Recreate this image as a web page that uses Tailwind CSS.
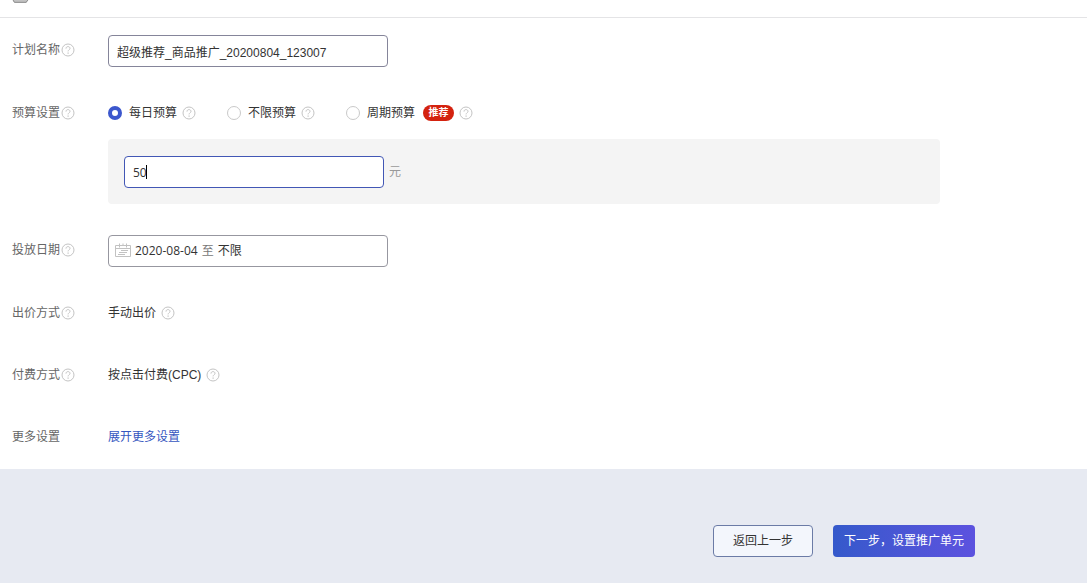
<!DOCTYPE html>
<html lang="zh-CN">
<head>
<meta charset="utf-8">
<title>新建推广计划</title>
<script src="https://cdn.jsdelivr.net/npm/@tailwindcss/browser@4"></script>
</head>
<body class="min-h-screen flex flex-col bg-[#e7eaf2] text-xs text-[#333] font-['Liberation_Sans','Noto_Sans_CJK_SC',sans-serif]">
<svg class="hidden">
    <symbol id="help" viewBox="0 0 14 14">
        <circle cx="7" cy="7" r="6" fill="none" stroke="#c4c4c4"/>
        <path d="M5 5.6C5 4.3 5.9 3.6 7 3.6s2 .7 2 1.8c0 1.3-1.9 1.5-1.9 3" fill="none" stroke="#c4c4c4"/>
        <path d="M6.5 9.6h1.2v1.2H6.5z" fill="#c4c4c4"/>
    </symbol>
</svg>

<header class="h-[18px] pl-3 bg-white border-b border-[#e4e4e6]">
    <svg class="w-[18px] h-[3px]" viewBox="0 0 18 3">
        <path d="M1 0h15l-1.5 3h-12L1 1z" fill="#c2c2c2"/>
        <path d="M1 0l1.5 2.3h11.5L16 0" fill="none" stroke="#8f8f8f"/>
    </svg>
</header>

<main class="bg-white px-3 pt-[17px] pb-4 space-y-[30px]">
    <div class="flex">
        <label for="plan-name" class="w-24 h-[30px] flex items-center gap-px shrink-0 text-[#666]">计划名称<svg class="size-[14px]"><use href="#help"/></svg></label>
        <input id="plan-name" type="text" value="超级推荐_商品推广_20200804_123007"
               class="w-[280px] h-8 px-2 rounded-[4px] border border-[#85859a] bg-white outline-none"/>
    </div>

    <div class="flex mb-[31px]">
        <div class="w-24 h-8 flex items-center gap-px shrink-0 text-[#666]">预算设置<svg class="size-[14px]"><use href="#help"/></svg></div>
        <div class="grow max-w-[832px]">
            <div class="h-8 flex items-center">
                <input id="daily" type="radio" name="budget" checked class="appearance-none size-[14px] rounded-full border border-[#c9c9c9] bg-white checked:border-[4px] checked:border-[#3c57cd]"/>
                <label for="daily" class="ml-[7px]">每日预算</label>
                <svg class="size-[14px] ml-[5px]"><use href="#help"/></svg>
                <input id="unlimited" type="radio" name="budget" class="appearance-none size-[14px] ml-[31px] rounded-full border border-[#c9c9c9] bg-white checked:border-[4px] checked:border-[#3c57cd]"/>
                <label for="unlimited" class="ml-[7px]">不限预算</label>
                <svg class="size-[14px] ml-[5px]"><use href="#help"/></svg>
                <input id="period" type="radio" name="budget" class="appearance-none size-[14px] ml-[31px] rounded-full border border-[#c9c9c9] bg-white checked:border-[4px] checked:border-[#3c57cd]"/>
                <label for="period" class="ml-[7px]">周期预算</label>
                <span class="w-[31px] h-4 ml-2 flex items-center justify-center rounded-full bg-[#d4220f] text-white text-[10px] font-bold">推荐</span>
                <svg class="size-[14px] ml-[5px]"><use href="#help"/></svg>
            </div>
            <div class="mt-[10px] px-4 pt-[17px] pb-4 flex items-center rounded-[4px] bg-[#f4f4f4]">
                <div class="relative">
                    <input id="amount" type="text" value="50" aria-label="每日预算金额"
                           class="block w-[260px] h-8 px-2 rounded-[4px] border border-[#4257b5] bg-white outline-none font-['Open_Sans',sans-serif]"/>
                    <!-- text cursor -->
                    <span class="absolute left-[22px] top-[9px] w-px h-[14px] bg-black"></span>
                </div>
                <label for="amount" class="ml-[5px] text-[#999]">元</label>
            </div>
        </div>
    </div>

    <div class="flex">
        <label for="dates" class="w-24 h-[30px] flex items-center gap-px shrink-0 text-[#666]">投放日期<svg class="size-[14px]"><use href="#help"/></svg></label>
        <button id="dates" type="button" class="w-[280px] h-8 px-[6px] flex items-center rounded-[4px] border border-[#9797a0] bg-white font-['Open_Sans','Noto_Sans_CJK_SC',sans-serif]">
            <svg class="w-4 h-4 mr-1" viewBox="0 0 16 16" fill="none" stroke="#c2c2c2">
                <path d="M.5 2.5h15v11H.5zM.5 5.5h15M4.5 .5v4M11.5 .5v4M8 .5v2M6 7.5h7M4 9.5h8M3 11.5h7"/>
            </svg>
            <span>2020-08-04</span>
            <span class="mx-1 text-[#777]">至</span>
            <span>不限</span>
        </button>
    </div>

    <div class="flex h-8 items-center">
        <div class="w-24 flex items-center gap-px shrink-0 text-[#666]">出价方式<svg class="size-[14px]"><use href="#help"/></svg></div>
        <span>手动出价</span>
        <svg class="size-[14px] ml-[5px]"><use href="#help"/></svg>
    </div>

    <div class="flex h-8 items-center">
        <div class="w-24 flex items-center gap-px shrink-0 text-[#666]">付费方式<svg class="size-[14px]"><use href="#help"/></svg></div>
        <span>按点击付费(CPC)</span>
        <svg class="size-[14px] ml-[5px]"><use href="#help"/></svg>
    </div>

    <div class="flex h-8 items-center">
        <div class="w-24 shrink-0 text-[#666]">更多设置</div>
        <a href="#" class="text-[#3556c0]">展开更多设置</a>
    </div>
</main>

<footer class="flex justify-end gap-5 pt-14 pr-28">
    <button type="button" class="w-[100px] h-8 rounded-[4px] border border-[#6b7ba6] bg-[#f3f6fc]">返回上一步</button>
    <button type="button" class="w-[142px] h-8 rounded-[4px] bg-linear-to-r from-[#3459cb] to-[#5c52df] text-white">下一步，设置推广单元</button>
</footer>
</body>
</html>
